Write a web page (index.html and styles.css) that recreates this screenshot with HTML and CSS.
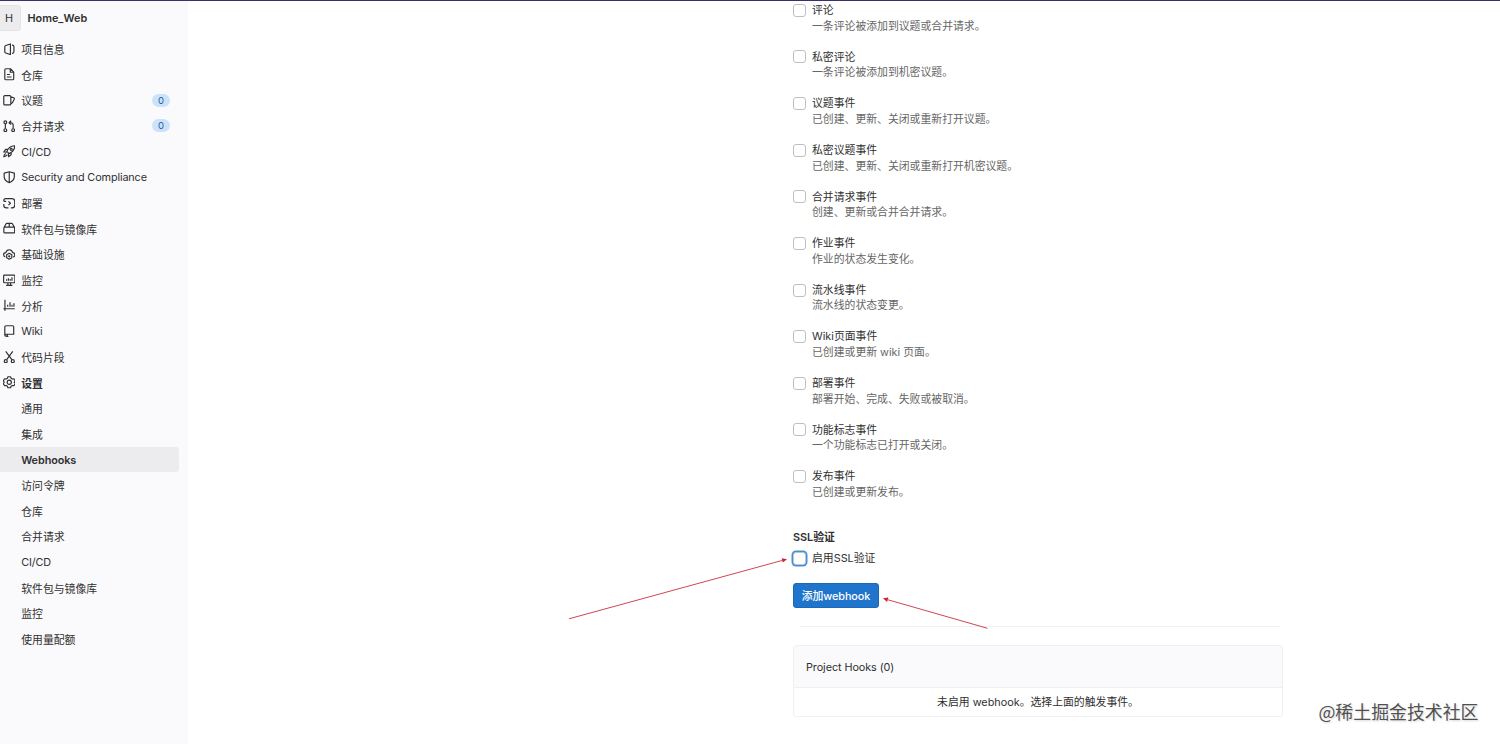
FILE: index.html
```html
<!DOCTYPE html>
<html lang="zh-CN">

<head>
    <meta charset="UTF-8">
    <meta name="viewport" content="width=device-width, initial-scale=1.0">
    <title>Webhooks · Home_Web</title>
    <link rel="stylesheet" href="styles.css">
</head>

<body>
    <div class="topbar"></div>
    <div class="layout">
        <aside class="sidebar">
            <div class="project">
                <span class="avatar">H</span>
                <span class="project-name">Home_Web</span>
            </div>
            <ul class="menu">
                <li>
                    <svg viewBox="0 0 16 16"><path d="M9.500 1.200L3.500 3.200Q2.300 3.600 2.300 4.800v6.400q0 1.200 1.200 1.600l6 2zM11.500 2.800h.5q2 0 2 2v6.400q0 2-2 2h-.5"/></svg>
                    <span>项目信息</span>
                </li>
                <li>
                    <svg viewBox="0 0 16 16"><path d="M9.5 1H3.7Q2.3 1 2.3 2.4v11.2Q2.3 15 3.7 15h8.6q1.4 0 1.4-1.4V5.2zM9.3 1.2v4.2h4.2M5 8.3h4M5 11.5h6"/></svg>
                    <span>仓库</span>
                </li>
                <li>
                    <svg viewBox="0 0 16 16"><path d="M2.3 2h6.4Q10 2 10 3.3v9.4Q10 14 8.7 14H2.3Q1 14 1 12.7V3.3Q1 2 2.3 2zM10 3.5l3.6 1.3q1.3.5.8 1.8L12 11.2 10 12.5"/></svg>
                    <span>议题</span>
                    <span class="badge">0</span>
                </li>
                <li>
                    <svg viewBox="0 0 16 16"><circle cx="3" cy="3" r="1.8"/><circle cx="3" cy="13" r="1.8"/><circle cx="13" cy="13" r="1.8"/><path d="M3 5v6M13 11V6.5Q13 3.5 10 3.5H8M10.3 1L7.8 3.5l2.5 2.5"/></svg>
                    <span>合并请求</span>
                    <span class="badge">0</span>
                </li>
                <li>
                    <svg viewBox="0 0 16 16"><path d="M5 8.2Q7.5 1.2 15 1q0 7-7.2 10zM6 5.6H3.4L1 9l4 .2M10.4 10v2.6L7 15l-.2-4M3.5 10.8Q1.3 12 1 15q3-.2 4.2-2.4"/><circle cx="10.5" cy="5.5" r="1.3"/></svg>
                    <span class="latin">CI/CD</span>
                </li>
                <li>
                    <svg viewBox="0 0 16 16"><path d="M8 1L14.5 2.7V7q0 5.3-6.5 8Q1.5 12.300 1.500 7V2.700zM8 1v14"/></svg>
                    <span class="latin">Security and Compliance</span>
                </li>
                <li>
                    <svg viewBox="0 0 16 16"><path d="M1 5.500V4.500Q1 2 3.500 2h8Q15 2 15 5.500v5Q15 14 11.500 14H10M1 5.500h3M1 9v1.500Q1 14 4.500 14H7M7 5.500L9.500 8 7 10.500"/></svg>
                    <span>部署</span>
                </li>
                <li>
                    <svg viewBox="0 0 16 16"><path d="M1.200 7L4 2.300Q4.300 1.800 5 1.800h6q.7 0 1 .5L14.800 7M2.300 6.500h11.400q1.200 0 1.200 1.200v5.100q0 1.200-1.200 1.200H2.300q-1.200 0-1.200-1.200V7.700q0-1.200 1.200-1.200zM8 2v4.500"/></svg>
                    <span>软件包与镜像库</span>
                </li>
                <li>
                    <svg viewBox="0 0 16 16"><path d="M3 11.500Q.8 11 .8 8.700.8 6.200 3.600 6 4.500 2.200 8 2.200T12.400 6q2.800.2 2.800 2.700 0 2.300-2.200 2.800M8 6.800l3.300 1.900v3.800L8 14.400 4.700 12.500V8.700z"/><circle cx="8" cy="10.600" r=".7"/></svg>
                    <span>基础设施</span>
                </li>
                <li>
                    <svg viewBox="0 0 16 16"><path d="M1.800 1.500h12.400q1 0 1 1v7.700q0 1-1 1H1.800q-1 0-1-1V2.500q0-1 1-1zM4 14.500h8M6.300 11.500v3M9.700 11.500v3M4.600 8.500V6.800M6.900 8.500V5.500M9.200 8.500V6.300M11.500 8.500V4"/></svg>
                    <span>监控</span>
                </li>
                <li>
                    <svg viewBox="0 0 16 16"><path d="M2.500 1v14M.5 12.500H15M6 10V7.500M9 10V4M11.500 10V7.500M14 10V5.500"/></svg>
                    <span>分析</span>
                </li>
                <li>
                    <svg viewBox="0 0 16 16"><path d="M4 1h8.500q1.200 0 1.200 1.200v9.600H4q-1.700 0-1.700 1.300V2.700Q2.300 1 4 1zM2.300 13q0 1.300 1.700 1.300h1M5.500 12v3.500l1.300-1"/></svg>
                    <span class="latin">Wiki</span>
                </li>
                <li>
                    <svg viewBox="0 0 16 16"><path d="M3.500.5L11.300 11M12.500.5L4.700 11"/><circle cx="3.500" cy="13" r="1.900"/><circle cx="12.500" cy="13" r="1.900"/></svg>
                    <span>代码片段</span>
                </li>
                <li class="current">
                    <svg viewBox="0 0 16 16"><path d="M6.300 1h3.400l.6 1.900 1.700 1 2-.4 1.600 2.900L14.300 8l1.300 1.600-1.600 2.900-2-.4-1.700 1-.6 1.900H6.300l-.6-1.900-1.700-1-2 .4L.4 9.600 1.700 8 .4 6.400 2 3.500l2 .4 1.700-1z"/><circle cx="8" cy="8" r="2.700"/></svg>
                    <span>设置</span>
                </li>
            </ul>
            <ul class="menu submenu">
                <li>通用</li>
                <li>集成</li>
                <li class="active">Webhooks</li>
                <li>访问令牌</li>
                <li>仓库</li>
                <li>合并请求</li>
                <li class="latin">CI/CD</li>
                <li>软件包与镜像库</li>
                <li>监控</li>
                <li>使用量配额</li>
            </ul>
        </aside>

        <main class="content">
            <div class="events">
                <label class="event">
                    <input type="checkbox">
                    <span class="title">评论</span>
                    <span class="help">一条评论被添加到议题或合并请求。</span>
                </label>
                <label class="event">
                    <input type="checkbox">
                    <span class="title">私密评论</span>
                    <span class="help">一条评论被添加到机密议题。</span>
                </label>
                <label class="event">
                    <input type="checkbox">
                    <span class="title">议题事件</span>
                    <span class="help">已创建、更新、关闭或重新打开议题。</span>
                </label>
                <label class="event">
                    <input type="checkbox">
                    <span class="title">私密议题事件</span>
                    <span class="help">已创建、更新、关闭或重新打开机密议题。</span>
                </label>
                <label class="event">
                    <input type="checkbox">
                    <span class="title">合并请求事件</span>
                    <span class="help">创建、更新或合并合并请求。</span>
                </label>
                <label class="event">
                    <input type="checkbox">
                    <span class="title">作业事件</span>
                    <span class="help">作业的状态发生变化。</span>
                </label>
                <label class="event">
                    <input type="checkbox">
                    <span class="title">流水线事件</span>
                    <span class="help">流水线的状态变更。</span>
                </label>
                <label class="event">
                    <input type="checkbox">
                    <span class="title">Wiki页面事件</span>
                    <span class="help">已创建或更新 wiki 页面。</span>
                </label>
                <label class="event">
                    <input type="checkbox">
                    <span class="title">部署事件</span>
                    <span class="help">部署开始、完成、失败或被取消。</span>
                </label>
                <label class="event">
                    <input type="checkbox">
                    <span class="title">功能标志事件</span>
                    <span class="help">一个功能标志已打开或关闭。</span>
                </label>
                <label class="event">
                    <input type="checkbox">
                    <span class="title">发布事件</span>
                    <span class="help">已创建或更新发布。</span>
                </label>
            </div>

            <h4 class="ssl-heading">SSL验证</h4>
            <label class="event ssl">
                <input type="checkbox" class="focused">
                <span class="title">启用SSL验证</span>
            </label>
            <button class="btn-confirm">添加webhook</button>
            <hr>
            <div class="card">
                <div class="card-header">Project Hooks (0)</div>
                <div class="card-body">未启用 webhook。选择上面的触发事件。</div>
            </div>
        </main>
    </div>

    <svg class="arrows" viewBox="0 0 1500 744">
        <path class="line" d="M569 618.800L782 560.500M987.500 628.300L888 599.800"/>
        <path class="head" d="M787 559.200L782.800 562.600 781.600 558.300zM883 598.300L888.400 597.600 887.100 602z"/>
    </svg>
    <div class="watermark">@稀土掘金技术社区</div>
</body>

</html>
```
FILE: styles.css
```css
* {
    box-sizing: border-box;
}

body {
    margin: 0;
    height: 744px;
    overflow: hidden;
    position: relative;
    background: #fff;
    color: #303030;
    font-family: Inter, "Noto Sans CJK SC", sans-serif;
    font-size: 10.85px;
}

.topbar {
    height: 1px;
    background: #3b3068;
}

.layout {
    display: flex;
    height: 743px;
}

/* sidebar */
.sidebar {
    width: 188px;
    background: #fafafc;
}

.project {
    display: flex;
    align-items: center;
    height: 35.2px;
    padding-bottom: 2px;
}

.avatar {
    width: 21px;
    height: 26px;
    line-height: 25px;
    padding-left: 5px;
    background: #ececef;
    border: 1px solid #e4e4e8;
    border-left: 0;
    border-radius: 0 3px 3px 0;
}

.project-name {
    margin-left: 6.5px;
    font-size: 10.85px;
    font-weight: 600;
}

.menu {
    list-style: none;
    margin: 0;
    padding: 0;
}

.menu li {
    display: flex;
    align-items: center;
    height: 25.67px;
    padding-left: 2.5px;
    white-space: nowrap;
}

.menu svg {
    width: 12.5px;
    height: 12.5px;
    margin-right: 6.2px;
    fill: none;
    stroke: #303030;
    stroke-width: 1.5;
    stroke-linejoin: round;
}

.menu .latin {
    letter-spacing: -0.13px;
}

.menu .current {
    font-weight: 600;
}

.menu .badge {
    width: 18px;
    height: 13px;
    margin-left: auto;
    margin-right: 18px;
    border-radius: 7px;
    background: #cbe2f9;
    color: #1f5ca8;
    font-size: 9.5px;
    line-height: 13px;
    text-align: center;
}

.submenu li {
    width: 179px;
    padding-left: 21.2px;
}

.submenu .active {
    background: #ececef;
    border-radius: 0 3px 3px 0;
    font-weight: 600;
    letter-spacing: -0.08px;
}

/* form */
.content {
    width: 490px;
    margin-left: 605px;
    padding-top: 1.5px;
}

.event {
    display: grid;
    grid-template-columns: 13px 1fr;
    column-gap: 6px;
    height: 46.64px;
    grid-template-rows: 15.6px 15.6px;
    line-height: 15.6px;
    align-items: center;
}

.event input {
    appearance: none;
    width: 13px;
    height: 13px;
    margin: 0;
    border: 1px solid #bfbfc3;
    border-radius: 3px;
    background: #fff;
}

.events span {
    padding-top: 1.2px;
}

.event .help {
    grid-column: 2;
    color: #666;
}

.event .focused {
    border-color: #b9c6d6;
    box-shadow: 0 0 0 1.5px #4a8fd6;
}

.ssl-heading {
    margin: 15px 0 5px;
    font-size: 10.85px;
    font-weight: 600;
    line-height: 15.6px;
}

.ssl {
    height: 31.8px;
}

.btn-confirm {
    display: block;
    width: 86px;
    height: 25px;
    padding: 0 0 1px;
    border: 1px solid #1b69b6;
    border-radius: 3px;
    background: #1f75cb;
    color: #fff;
    font-family: inherit;
    font-size: 10.85px;
    font-weight: 500;
    letter-spacing: -0.1px;
}

hr {
    margin: 18px 3px 18px 7px;
    border: 0;
    border-top: 1px solid #f0f0f2;
}

.card {
    border: 1px solid #f0f0f3;
    border-radius: 3px;
}

.card-header {
    height: 42px;
    padding-left: 12px;
    border-bottom: 1px solid #f0f0f3;
    background: #fafafc;
    line-height: 42px;
    letter-spacing: -0.08px;
}

.card-body {
    height: 28px;
    line-height: 29px;
    text-align: center;
}

/* overlays */
.arrows {
    position: absolute;
    top: 0;
    left: 0;
    width: 1500px;
    height: 744px;
    pointer-events: none;
}

.arrows .line {
    fill: none;
    stroke: #cf4650;
    stroke-width: 1;
}

.arrows .head {
    fill: #c9232f;
}

.watermark {
    position: absolute;
    right: 21.5px;
    bottom: 20px;
    color: #505050;
    font-family: "Noto Sans CJK SC", sans-serif;
    font-size: 17.9px;
    line-height: 26px;
    text-shadow: 0 0 2px #fff, 1px 1px 2px #ccc;
}
```
